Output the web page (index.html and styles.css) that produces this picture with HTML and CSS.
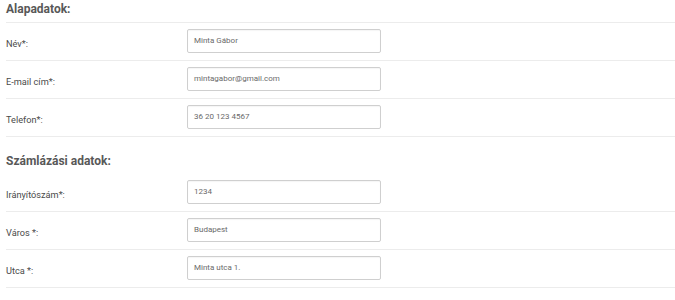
FILE: index.html
```html
<!DOCTYPE html>
<html lang="hu">
<head>
<meta charset="utf-8">
<title>Adatok</title>
<link rel="stylesheet" href="styles.css">
</head>
<body>
<div class="form">
  <section class="section">
    <h2 class="section-title section-title--ruled">Alapadatok:</h2>
    <div class="row">
      <label class="label">Név*:</label>
      <div class="field">Minta Gábor</div>
    </div>
    <div class="row">
      <label class="label">E-mail cím*:</label>
      <div class="field">mintagabor@gmail.com</div>
    </div>
    <div class="row">
      <label class="label">Telefon*:</label>
      <div class="field">36 20 123 4567</div>
    </div>
  </section>
  <section class="section">
    <h2 class="section-title section-title--spaced">Számlázási adatok:</h2>
    <div class="row">
      <label class="label">Irányítószám*:</label>
      <div class="field">1234</div>
    </div>
    <div class="row">
      <label class="label">Város *:</label>
      <div class="field">Budapest</div>
    </div>
    <div class="row">
      <label class="label">Utca *:</label>
      <div class="field">Minta utca 1.</div>
    </div>
  </section>
</div>
</body>
</html>
```

FILE: styles.css
```css
html, body {
  margin: 0;
  padding: 0;
  background: #ffffff;
}

body {
  font-family: Roboto, "Liberation Sans", Arial, sans-serif;
  color: #555555;
}

.form {
  padding-left: 6px;
}

.section-title {
  margin: 0;
  font-size: 12px;
  line-height: 18px;
  font-weight: 700;
  color: #585858;
  padding-bottom: 4px;
}

.section-title--ruled {
  border-bottom: 1px solid #ececec;
}

.section-title--spaced {
  margin-top: 15px;
}

.row {
  display: grid;
  grid-template-columns: 181px 194px;
  align-items: start;
  padding: 6px 0 7px;
  border-bottom: 1px solid #ececec;
}

.label {
  font-size: 9.2px;
  line-height: 14px;
  padding-top: 8px;
  color: #4a4a4a;
}

.field {
  box-sizing: border-box;
  height: 24px;
  border: 1px solid #cfcfcf;
  border-radius: 2px;
  padding: 0 6px;
  font-size: 8px;
  line-height: 22px;
  color: #6a6a6a;
  box-shadow: inset 0 1px 1px rgba(0, 0, 0, 0.04);
}
```
